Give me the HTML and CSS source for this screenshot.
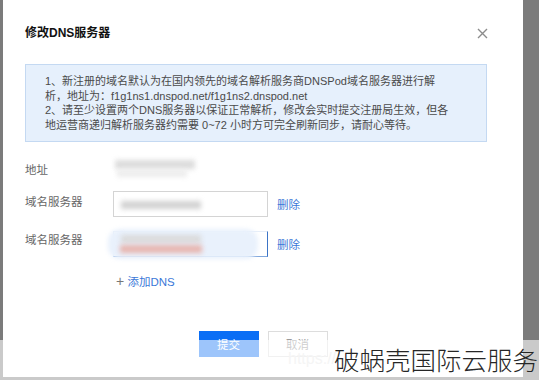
FILE: index.html
```html
<!DOCTYPE html>
<html lang="zh-CN">
  <head>
    <meta charset="UTF-8" />
    <title>修改DNS服务器</title>
    <link rel="stylesheet" href="styles.css">
  </head>
  <body>
    <div class="modal">
      <div class="head">
        <h2>修改DNS服务器</h2>
        <svg class="close" width="11" height="11" viewBox="0 0 11 11">
          <path d="M1 1L10 10M10 1L1 10" stroke="#8c8c8c" stroke-width="1.4" fill="none" />
        </svg>
      </div>
      <div class="notice">
        1、新注册的域名默认为在国内领先的域名解析服务商DNSPod域名服务器进行解<br>
        析，地址为：f1g1ns1.dnspod.net/f1g1ns2.dnspod.net<br>
        2、请至少设置两个DNS服务器以保证正常解析，修改会实时提交注册局生效，但各<br>
        地运营商递归解析服务器约需要 0~72 小时方可完全刷新同步，请耐心等待。
      </div>
      <div class="row first">
        <label>地址</label>
        <div class="value"><span class="blur b1"></span><span class="blur b2"></span></div>
      </div>
      <div class="row second">
        <label>域名服务器</label>
        <div class="input"><span class="blur b3"></span></div>
        <a class="del">删除</a>
      </div>
      <div class="row third">
        <label>域名服务器</label>
        <div class="input focus">
          <span class="glow"></span>
          <span class="blur b4"></span>
          <span class="blur b5"></span>
        </div>
        <a class="del">删除</a>
      </div>
      <div class="add"><span class="plus">+</span> 添加DNS</div>
      <div class="footer">
        <button class="submit">提交</button>
        <button class="cancel">取消</button>
      </div>
    </div>
    <div class="band"></div>
    <div class="url">https://</div>
    <div class="mark">破蜗壳国际云服务</div>
  </body>
</html>
```

FILE: styles.css
```css
body {
  margin: 0;
  height: 380px;
  overflow: hidden;
  background: #7b7b7b;
  font-family: "Liberation Sans", "Noto Sans CJK SC", sans-serif;
  position: relative;
}
.modal {
  margin-left: 3px;
  width: 462px;
  height: 352px;
  background: #fff;
  padding: 25px 36px 0 22px;
}
.head {
  display: flex;
  justify-content: space-between;
  align-items: center;
  height: 16px;
}
h2 {
  margin: 0;
  font-size: 12px;
  font-weight: bold;
  color: #111;
  line-height: 16px;
}
.close {
  margin-right: -1px;
}
.notice {
  margin-top: 23px;
  background: #e6f0fc;
  border: 1px solid #c4d9f2;
  padding: 9px 10px 9px 19px;
  font-size: 11px;
  line-height: 14.5px;
  color: #4a4a4a;
  white-space: nowrap;
}
.row {
  display: flex;
  align-items: flex-start;
  height: 26px;
}
.row label {
  width: 88px;
  font-size: 11.5px;
  color: #666;
  line-height: 16px;
}
.first {
  margin-top: 15px;
}
.first label {
  padding-top: 5px;
}
.second {
  margin-top: 8px;
}
.second label {
  padding-top: 3px;
}
.third {
  margin-top: 14px;
}
.third label {
  padding-top: 1px;
}
.value {
  position: relative;
  width: 90px;
  height: 24px;
}
.input {
  position: relative;
  width: 153px;
  height: 24px;
  border: 1px solid #d4d4d4;
}
.input.focus {
  border-color: #e6eef9;
  border-right-color: #3c74c6;
  border-bottom-color: #7fa6dc;
}
.blur {
  position: absolute;
  filter: blur(2.5px);
}
.b1 {
  left: 2px;
  top: 3px;
  width: 80px;
  height: 9px;
  background: #dcdcdc;
}
.b2 {
  left: 4px;
  top: 13px;
  width: 70px;
  height: 7px;
  background: #ececec;
}
.b3 {
  left: 7px;
  top: 9px;
  width: 80px;
  height: 8px;
  background: #d2d2d2;
}
.glow {
  position: absolute;
  left: -6px;
  top: -3px;
  width: 150px;
  height: 30px;
  background: #e9f1fc;
  border-radius: 12px;
  filter: blur(2px);
}
.b4 {
  left: 7px;
  top: 3px;
  width: 80px;
  height: 8px;
  background: #dadada;
}
.b5 {
  left: 6px;
  top: 13px;
  width: 82px;
  height: 8px;
  background: #e7b4ae;
}
.del {
  margin-left: 9px;
  margin-top: 6px;
  font-size: 11.5px;
  color: #3b78d8;
  line-height: 16px;
}
.add {
  margin-top: 16px;
  padding-left: 91px;
  font-size: 11.5px;
  line-height: 16px;
  color: #3b78d8;
}
.plus {
  color: #777;
  font-size: 14px;
}
.footer {
  display: flex;
  justify-content: center;
  gap: 9px;
  margin: 41px -36px 0 -22px;
}
.footer button {
  width: 60px;
  height: 26px;
  font-family: inherit;
  font-size: 11.5px;
  border-radius: 0;
}
.submit {
  background: #0a6ef5;
  color: #fff;
  border: none;
}
.cancel {
  background: #fff;
  color: #888;
  border: 1px solid #ddd;
}
.band {
  position: absolute;
  left: 0;
  right: 0;
  top: 340px;
  height: 40px;
  background: rgba(255, 255, 255, 0.6);
}
.url {
  position: absolute;
  left: 288px;
  top: 350px;
  font-size: 16px;
  color: #f5f5f5;
}
.mark {
  position: absolute;
  right: 1px;
  top: 342px;
  font-family: "Noto Sans CJK SC", sans-serif;
  font-weight: 300;
  font-size: 25.5px;
  line-height: 34px;
  color: #262626;
}
```
